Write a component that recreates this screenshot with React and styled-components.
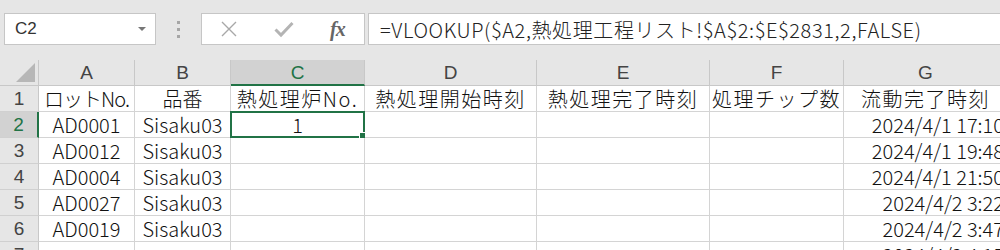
import React from "react";
import styled, { createGlobalStyle } from "styled-components";

const GlobalStyle = createGlobalStyle`
  html, body {
    margin: 0;
    padding: 0;
    background: #ffffff;
    overflow: hidden;
  }
  body {
    font-family: "Noto Sans CJK JP", "Liberation Sans", sans-serif;
  }
`;

const green = "#217346";

const Page = styled.div`
  width: 1000px;
  height: 250px;
  overflow: hidden;
  display: flex;
  flex-direction: column;
`;

const Toolbar = styled.div`
  flex-shrink: 0;
  height: 60px;
  background: #e6e6e6;
  display: flex;
  align-items: flex-start;
  padding: 13px 0 0 4px;
  box-sizing: border-box;
`;

const NameBox = styled.div`
  width: 152px;
  height: 32px;
  box-sizing: border-box;
  background: #fff;
  border: 1px solid #c6c6c6;
  display: flex;
  align-items: center;
  justify-content: space-between;
  padding: 0 9px 0 10px;
  font-family: "Liberation Sans", sans-serif;
  font-size: 17px;
  color: #333;
`;

const Caret = styled.span`
  width: 0;
  height: 0;
  border-left: 4px solid transparent;
  border-right: 4px solid transparent;
  border-top: 4px solid #777;
`;

const Dots = styled.div`
  width: 45px;
  height: 32px;
  display: flex;
  flex-direction: column;
  align-items: center;
  justify-content: center;
  gap: 4px;
  span {
    width: 3px;
    height: 3px;
    background: #a6a6a6;
  }
`;

const FxGroup = styled.div`
  width: 164px;
  height: 32px;
  box-sizing: border-box;
  background: #fff;
  border: 1px solid #c6c6c6;
  display: flex;
  align-items: center;
  padding-left: 18px;
  gap: 36px;
`;

const FxLabel = styled.span`
  font-family: "Liberation Serif", serif;
  font-style: italic;
  font-weight: bold;
  font-size: 20px;
  color: #666;
  letter-spacing: -1px;
`;

const FormulaBar = styled.div`
  flex: 1;
  height: 32px;
  box-sizing: border-box;
  margin-left: 3px;
  background: #fff;
  border: 1px solid #c6c6c6;
  border-right: none;
  display: flex;
  align-items: center;
  padding-left: 11px;
  font-size: 20px;
  font-weight: 300;
  letter-spacing: 0.6px;
  color: #222;
  white-space: nowrap;
  overflow: hidden;
`;

const Grid = styled.div`
  flex-shrink: 0;
  display: grid;
  grid-template-columns: 39px 96px 96px 134px 172px 173px 134px 164px;
  grid-auto-rows: 26px;
  width: 1008px;
`;

const Corner = styled.div`
  background: #e6e6e6;
  border-right: 1px solid #c8c8c8;
  border-bottom: 1px solid #c8c8c8;
  box-sizing: border-box;
  position: relative;
  &::after {
    content: "";
    position: absolute;
    right: 3px;
    bottom: 3px;
    width: 0;
    height: 0;
    border-left: 19px solid transparent;
    border-bottom: 19px solid #b7b7b7;
  }
`;

const ColHead = styled.div`
  background: ${(p) => (p.$active ? "#d2d2d2" : "#e6e6e6")};
  color: ${(p) => (p.$active ? green : "#444")};
  border-right: 1px solid #c8c8c8;
  border-bottom: ${(p) => (p.$active ? `2px solid ${green}` : "1px solid #c8c8c8")};
  box-sizing: border-box;
  display: flex;
  align-items: center;
  justify-content: center;
  font-family: "Liberation Sans", sans-serif;
  font-size: 19px;
  padding-top: ${(p) => (p.$active ? "1px" : "0")};
`;

const RowHead = styled.div`
  background: ${(p) => (p.$active ? "#d2d2d2" : "#e6e6e6")};
  color: ${(p) => (p.$active ? green : "#444")};
  border-right: ${(p) => (p.$active ? `2px solid ${green}` : "1px solid #c8c8c8")};
  border-bottom: 1px solid #d0d0d0;
  box-sizing: border-box;
  display: flex;
  align-items: center;
  justify-content: center;
  font-family: "Liberation Sans", sans-serif;
  font-size: 19px;
`;

const Cell = styled.div`
  position: relative;
  background: #fff;
  border-right: 1px solid #d4d4d4;
  border-bottom: 1px solid #d4d4d4;
  box-sizing: border-box;
  display: flex;
  align-items: center;
  justify-content: ${(p) => (p.$align === "right" ? "flex-end" : "center")};
  padding: 0 3px;
  font-size: 20px;
  font-weight: 300;
  letter-spacing: ${(p) => p.$spacing || "0"};
  color: #111;
  white-space: nowrap;
  line-height: 26px;
`;

const Selection = styled.div`
  position: absolute;
  left: -1px;
  top: -1px;
  right: -1px;
  bottom: -1px;
  border: 2px solid ${green};
  pointer-events: none;
`;

const FillHandle = styled.div`
  position: absolute;
  right: -4px;
  bottom: -4px;
  width: 6px;
  height: 6px;
  background: ${green};
  border: 1px solid #fff;
`;

const columns = ["A", "B", "C", "D", "E", "F", "G"];

const rows = [
  ["ロットNo.", "品番", "熱処理炉No.", "熱処理開始時刻", "熱処理完了時刻", "処理チップ数", "流動完了時刻"],
  ["AD0001", "Sisaku03", "1", "", "", "", "2024/4/1 17:10"],
  ["AD0012", "Sisaku03", "", "", "", "", "2024/4/1 19:48"],
  ["AD0004", "Sisaku03", "", "", "", "", "2024/4/1 21:50"],
  ["AD0027", "Sisaku03", "", "", "", "", "2024/4/2 3:22"],
  ["AD0019", "Sisaku03", "", "", "", "", "2024/4/2 3:47"],
  ["", "", "", "", "", "", "2024/4/2 4:15"],
];

function spacingFor(i, j) {
  if (i !== 0) return "0";
  if (j === 0) return "-1px";
  if (j === 1) return "0";
  return "1.5px";
}

function XIcon() {
  return (
    <svg width="18" height="18" viewBox="0 0 18 18">
      <path d="M2 2 L16 16 M16 2 L2 16" stroke="#a8a8a8" strokeWidth="1.4" fill="none" />
    </svg>
  );
}

function CheckIcon() {
  return (
    <svg width="20" height="18" viewBox="0 0 20 18">
      <path d="M1.5 9.5 L7 15 L18.5 3" stroke="#b4b4b4" strokeWidth="3" fill="none" />
    </svg>
  );
}

export default function App() {
  return (
    <>
      <GlobalStyle />
      <Page>
        <Toolbar>
          <NameBox>
            C2
            <Caret />
          </NameBox>
          <Dots>
            <span />
            <span />
            <span />
          </Dots>
          <FxGroup>
            <XIcon />
            <CheckIcon />
            <FxLabel>fx</FxLabel>
          </FxGroup>
          <FormulaBar>=VLOOKUP($A2,熱処理工程リスト!$A$2:$E$2831,2,FALSE)</FormulaBar>
        </Toolbar>
        <Grid>
          <Corner />
          {columns.map((c) => (
            <ColHead key={c} $active={c === "C"}>
              {c}
            </ColHead>
          ))}
          {rows.map((r, i) => (
            <React.Fragment key={i}>
              <RowHead $active={i === 1}>{i + 1}</RowHead>
              {r.map((v, j) => (
                <Cell
                  key={j}
                  $align={j === 6 && i > 0 ? "right" : "center"}
                  $spacing={spacingFor(i, j)}
                >
                  {v}
                  {i === 1 && j === 2 && (
                    <Selection>
                      <FillHandle />
                    </Selection>
                  )}
                </Cell>
              ))}
            </React.Fragment>
          ))}
        </Grid>
      </Page>
    </>
  );
}
